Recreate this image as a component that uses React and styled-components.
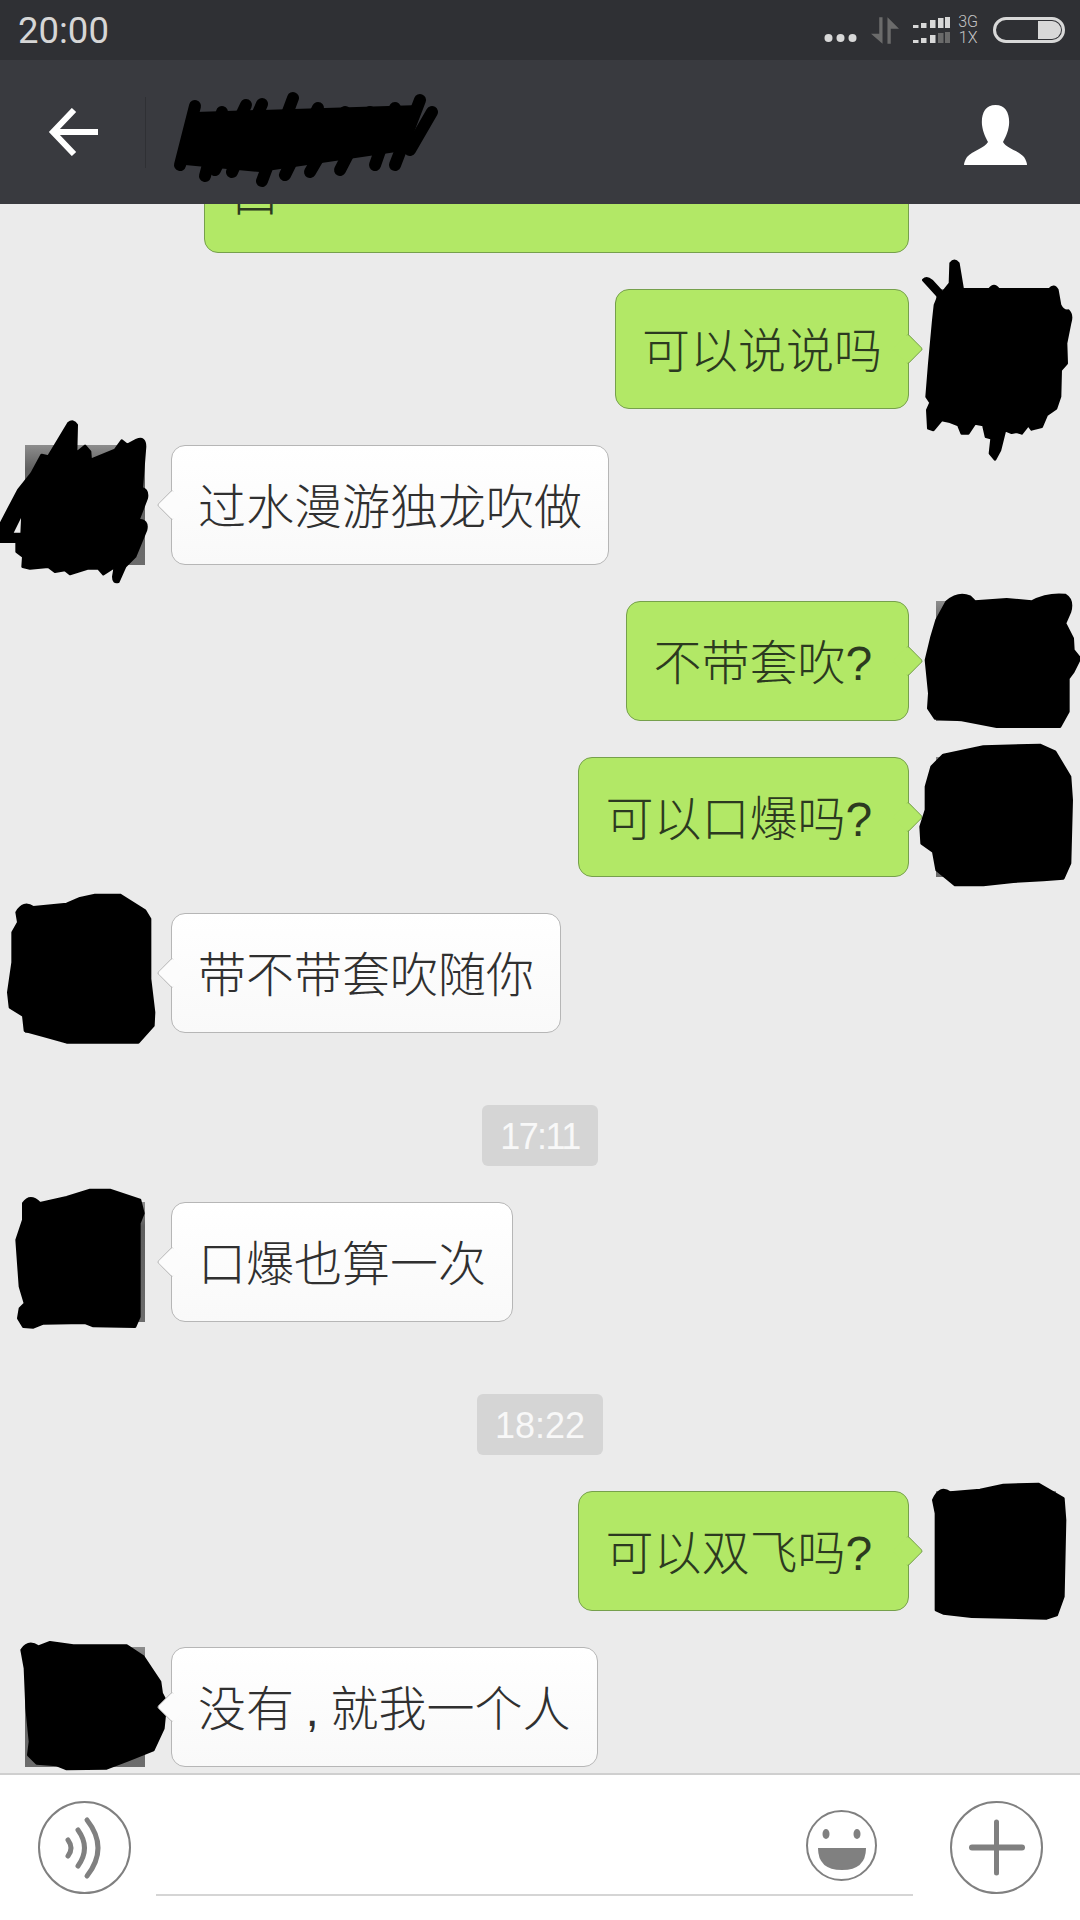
import React from 'react';
import styled, { createGlobalStyle } from 'styled-components';

const GlobalStyle = createGlobalStyle`
  html, body {
    margin: 0;
    padding: 0;
    background: #ebebeb;
  }
  #root {
    width: 1080px;
    height: 1920px;
  }
`;

const Screen = styled.div`
  width: 1080px;
  height: 1920px;
  display: flex;
  flex-direction: column;
  overflow: hidden;
  background: #ebebeb;
  font-family: 'Noto Sans CJK SC', 'Noto Sans', sans-serif;
`;

const StatusBar = styled.div`
  height: 60px;
  flex: none;
  background: #2f3034;
  display: flex;
  align-items: center;
  justify-content: space-between;
  padding: 0 15px 0 18px;
`;

const Clock = styled.span`
  font-family: Roboto, sans-serif;
  font-size: 36.5px;
  color: #d6d6d6;
`;

const StatusIcons = styled.div`
  display: flex;
  align-items: center;
  gap: 14px;
`;

const Dots = styled.svg`
  margin-top: 16px;
`;

const NetLabel = styled.div`
  font-family: Roboto, sans-serif;
  font-weight: 300;
  font-size: 16px;
  line-height: 16px;
  color: #c4c4c4;
  text-align: center;
  margin: 0 1px 0 -6px;
`;

const Battery = styled.div`
  width: 72px;
  height: 26px;
  box-sizing: border-box;
  border: 3px solid #d8d8d8;
  border-radius: 13px;
  display: flex;
  justify-content: flex-end;
  padding: 1px;
`;

const BatteryLevel = styled.div`
  width: 23px;
  background: #d8d8d8;
  border-radius: 0 10px 10px 0;
`;

const NavBar = styled.div`
  height: 144px;
  flex: none;
  background: #393a3f;
  display: flex;
  align-items: center;
  padding: 0 53px 0 48px;
`;

const Separator = styled.div`
  width: 1px;
  height: 71px;
  background: #2f3034;
  margin: 0 26px 0 47px;
`;

const NavTitle = styled.svg`
  flex: none;
  margin-top: 14px;
`;

const NavProfile = styled.svg`
  margin-left: auto;
  margin-top: 5px;
`;

const Chat = styled.div`
  flex: 1;
  min-height: 0;
  overflow: hidden;
  display: flex;
  flex-direction: column;
  justify-content: flex-end;
  gap: 36px;
  padding-bottom: 6px;
`;

const Row = styled.div`
  flex: none;
  display: flex;
  align-items: flex-start;
  justify-content: ${p => (p.$mine ? 'flex-end' : 'flex-start')};
  gap: ${p => (p.$mine ? '27px' : '26px')};
  padding: ${p => (p.$mine ? '0 24px 0 0' : '0 0 0 25px')};
`;

const Avatar = styled.div`
  position: relative;
  flex: none;
  width: 120px;
  height: 120px;
  background: linear-gradient(#8d8d8d, #5f5f5f 20%, #6c6c6c);
`;

const AvatarSpacer = styled.div`
  flex: none;
  width: 120px;
`;

const Scribble = styled.svg`
  position: absolute;
  left: ${p => p.$x}px;
  top: ${p => p.$y}px;
`;

const Bubble = styled.div`
  position: relative;
  box-sizing: border-box;
  min-width: ${p => p.$minWidth || 0}px;
  padding: 25px 26px 29px;
  font-size: 48px;
  font-weight: 300;
  line-height: 64px;
  white-space: nowrap;
  border-radius: 14px;
  border: 1px solid ${p => (p.$mine ? '#76a04c' : '#b6b6b6')};
  color: ${p => (p.$mine ? '#2c3a20' : '#303030')};
  background: ${p => (p.$mine ? '#b2e866' : 'linear-gradient(#ffffff, #f9f9f9)')};

  &::after {
    content: ${p => (p.$noTail ? 'none' : "''")};
    position: absolute;
    top: 48px;
    width: 21px;
    height: 21px;
    transform: rotate(45deg);
    background: ${p => (p.$mine ? '#b2e866' : '#fcfcfc')};
    border-radius: 3px;
    ${p => (p.$mine
      ? 'right: -11px; border-top: 1px solid #76a04c; border-right: 1px solid #76a04c;'
      : 'left: -11px; border-bottom: 1px solid #b6b6b6; border-left: 1px solid #b6b6b6;')}
  }
`;

const Punct = styled.span`
  display: inline-block;
  width: 36.5px;
  line-height: 1;
  text-align: ${p => p.$align || 'left'};
  font-family: 'Liberation Sans', sans-serif;
`;

const TimeRow = styled.div`
  flex: none;
  display: flex;
  justify-content: center;
  margin-top: 36px;
`;

const TimeLabel = styled.span`
  height: 61px;
  line-height: 63px;
  padding: 0 18px;
  border-radius: 6px;
  background: #d5d5d5;
  color: #f8f8f8;
  font-family: 'Liberation Sans', sans-serif;
  font-size: 36px;
  letter-spacing: ${p => p.$spacing || 0}px;
`;

const InputBar = styled.div`
  height: 147px;
  flex: none;
  box-sizing: border-box;
  background: #fff;
  border-top: 2px solid #cfcfcf;
  display: flex;
  align-items: flex-start;
  padding: 26px 37px 0 38px;
`;

const RoundIcon = styled.svg`
  flex: none;
`;

const Field = styled.div`
  width: 757px;
  height: 95px;
  box-sizing: border-box;
  margin: 0 37px 0 25px;
  border-bottom: 2px solid #d5d5d5;
  display: flex;
  justify-content: flex-end;
  padding: 9px 36px 0 0;
`;

const SignalIcon = () => {
  const xs = [0, 8, 17, 25, 32];
  const hs = [3, 5, 8, 10, 11];
  return (
    <svg width="37" height="26" viewBox="0 0 37 26">
      {xs.map((x, i) => (
        <rect key={'t' + i} x={x} y={11 - hs[i]} width="5.5" height={hs[i]} fill="#d8d8d8" />
      ))}
      {xs.map((x, i) => (
        <rect key={'b' + i} x={x} y={26 - hs[i]} width="5.5" height={hs[i]} fill={i > 2 ? '#6a6a6a' : '#d8d8d8'} />
      ))}
    </svg>
  );
};

// black marker scribbles over the avatars, traced from the picture at 3x
const scribbles = {
  a: {
    x: -36, y: -39, w: 180, h: 220,
    d: 'M70 90Q80 80 95 92L128 128 150 100 152 40Q163 25 175 40L180 70 188 118 268 118Q282 98 296 118L448 118Q462 102 472 120L480 165Q490 185 505 182 518 195 510 220L498 280 500 340 482 360 480 440 468 475 440 495 425 530 395 538 385 525 365 550 350 545 335 548 315 540 300 600 285 628 270 610 275 565 258 560 250 525 225 520 205 550 185 550 175 525 150 515 125 510 100 540 85 535 82 480 92 458 80 440 88 340 100 210 105 165 115 140Z',
  },
  b: {
    x: -25, y: -35, w: 180, h: 180,
    d: 'M0 395L0 345 55 240 95 190 125 135 145 140 205 40Q220 28 230 45L228 130 255 108 270 125 272 150 345 120 365 92 382 105 410 90Q435 80 435 110L425 235Q445 240 440 265L415 330Q445 330 438 360L405 440 375 470 355 515Q340 520 340 500L345 470 310 492 295 475 265 475 210 492 195 480 165 485 145 470 90 475 68 470 70 440 50 425 50 395ZM35 372L65 372 68 305Z',
  },
  c: {
    x: -36, y: -21, w: 180, h: 320,
    d: 'M140 65Q175 35 210 50L225 65 320 58 395 65Q440 40 495 45 520 60 510 95L495 130 518 175 520 210 540 235 520 275 505 295 505 395 480 440 370 440 290 440 185 420 105 415 85 385 88 340 78 240 95 170 110 120Z',
  },
  d: {
    x: -36, y: -177, w: 180, h: 320,
    d: 'M95 560L130 525 250 500 420 495 465 515 510 590 515 660 510 850 490 895 430 900 340 905 250 915 165 915 110 870 100 815 65 790 62 740 78 690 78 620Z',
  },
  e: {
    x: -25, y: -34, w: 180, h: 180,
    d: 'M50 100Q70 65 100 85L200 75 240 58 285 48 360 48 435 95 450 120 450 300 462 400 460 440 415 490 200 490 130 470 75 455 70 410 30 385 25 340 38 250 38 160 55 130Z',
  },
  f: {
    x: -25, y: -32, w: 180, h: 180,
    d: 'M70 100Q90 70 120 100L200 82 270 60 330 60 420 90 430 130 418 160 418 440 405 470 280 468 255 458 130 460 100 472 70 470 55 445 60 415 75 400 60 350 50 210 70 150Z',
  },
  g: {
    x: -36, y: -21, w: 180, h: 170,
    d: 'M100 90Q120 45 150 68L240 60 310 45 415 42 490 85 495 150 490 380 470 435 440 445 215 440 130 430 108 420 108 130Z',
  },
  h: {
    x: -25, y: -22, w: 180, h: 160,
    d: 'M65 75Q85 45 115 65L150 52 220 62 380 62 430 95 480 170 485 205 498 230 490 310 460 375 385 405 320 430 200 432 170 420 110 415 85 390 90 350 80 250 75 130Z',
  },
};

const ScribbledAvatar = ({ id }) => {
  const s = scribbles[id];
  return (
    <Avatar>
      <Scribble $x={s.x} $y={s.y} width={s.w} height={s.h} viewBox={`0 0 ${s.w * 3} ${s.h * 3}`}>
        <path d={s.d} fill="#000" fillRule="evenodd" stroke="#000" strokeWidth="8" strokeLinejoin="round" />
      </Scribble>
    </Avatar>
  );
};

const Message = ({ mine, scribble, children }) => (
  <Row $mine={mine}>
    {!mine && <ScribbledAvatar id={scribble} />}
    <Bubble $mine={mine}>{children}</Bubble>
    {mine && <ScribbledAvatar id={scribble} />}
  </Row>
);

const App = () => (
  <Screen>
    <GlobalStyle />
    <StatusBar>
      <Clock>20:00</Clock>
      <StatusIcons>
        <Dots width="33" height="10" viewBox="0 0 33 10">
          <circle cx="4.5" cy="5" r="4" fill="#d8d8d8" />
          <circle cx="16.5" cy="5" r="4" fill="#d8d8d8" />
          <circle cx="28.5" cy="5" r="4" fill="#d8d8d8" />
        </Dots>
        <svg width="28" height="27" viewBox="0 0 85 80">
          <path d="M0 50H25V0H35V80Z" fill="#6b6b6b" />
          <path d="M50 0V80H60V35H85Z" fill="#6b6b6b" />
        </svg>
        <SignalIcon />
        <NetLabel>3G<br />1X</NetLabel>
        <Battery><BatteryLevel /></Battery>
      </StatusIcons>
    </StatusBar>

    <NavBar>
      <svg width="50" height="48" viewBox="0 0 50 48">
        <path d="M26 2L5 24 26 46" fill="none" stroke="#fff" strokeWidth="6" />
        <path d="M5 24H50" fill="none" stroke="#fff" strokeWidth="6" />
      </svg>
      <Separator />
      <NavTitle width="268" height="98" viewBox="172 90 268 98">
        <path d="M195 112L420 105 410 150 260 172 185 165Z" fill="#000" />
        <g fill="none" stroke="#000" strokeWidth="12" strokeLinecap="round">
          <path d="M195 106L180 165" />
          <path d="M222 112L205 176" />
          <path d="M246 105L215 170" />
          <path d="M262 104L232 172" />
          <path d="M293 98L262 181" />
          <path d="M318 108L285 175" />
          <path d="M345 112L310 172" />
          <path d="M370 112L340 170" />
          <path d="M395 108L375 165" />
          <path d="M420 100L395 165" />
          <path d="M432 112L410 150" />
        </g>
      </NavTitle>
      <NavProfile width="63" height="60" viewBox="0 0 63 60">
        <path d="M31.5 0C42 0 46 9 45 20 44 28 41 33 39 37 42 43 55 46 60 52 62 55 63 58 63 60H0C0 58 1 55 3 52 8 46 21 43 24 37 22 33 19 28 18 20 17 9 21 0 31.5 0Z" fill="#fff" />
      </NavProfile>
    </NavBar>

    <Chat>
      <Row $mine>
        <Bubble $mine $minWidth={705} $noTail>&nbsp;<br />口</Bubble>
        <AvatarSpacer />
      </Row>
      <Message mine scribble="a">可以说说吗</Message>
      <Message scribble="b">过水漫游独龙吹做</Message>
      <Message mine scribble="c">不带套吹<Punct>?</Punct></Message>
      <Message mine scribble="d">可以口爆吗<Punct>?</Punct></Message>
      <Message scribble="e">带不带套吹随你</Message>
      <TimeRow><TimeLabel $spacing={-1.6}>17:11</TimeLabel></TimeRow>
      <Message scribble="f">口爆也算一次</Message>
      <TimeRow><TimeLabel>18:22</TimeLabel></TimeRow>
      <Message mine scribble="g">可以双飞吗<Punct>?</Punct></Message>
      <Message scribble="h">没有<Punct $align="center">,</Punct>就我一个人</Message>
    </Chat>

    <InputBar>
      <RoundIcon width="93" height="93" viewBox="0 0 93 93">
        <circle cx="46.5" cy="46.5" r="45.5" fill="none" stroke="#808080" strokeWidth="2" />
        <g fill="none" stroke="#808080" strokeWidth="5" strokeLinecap="round">
          <path d="M30 39Q36 47 30 55" />
          <path d="M40 29Q53 47 40 65" />
          <path d="M49 19Q71 47 49 75" />
        </g>
      </RoundIcon>
      <Field>
        <RoundIcon width="71" height="71" viewBox="0 0 71 71">
          <circle cx="35.5" cy="35.5" r="34.5" fill="none" stroke="#808080" strokeWidth="2" />
          <ellipse cx="20" cy="24" rx="3.5" ry="5" fill="#808080" />
          <ellipse cx="51" cy="24" rx="3.5" ry="5" fill="#808080" />
          <path d="M12 38H60Q60 60 36 60 12 60 12 38Z" fill="#808080" />
        </RoundIcon>
      </Field>
      <RoundIcon width="93" height="93" viewBox="0 0 93 93">
        <circle cx="46.5" cy="46.5" r="45.5" fill="none" stroke="#808080" strokeWidth="2" />
        <path d="M22 46.5H72" stroke="#808080" strokeWidth="6" strokeLinecap="round" />
        <path d="M46.5 21V72" stroke="#808080" strokeWidth="5" strokeLinecap="round" />
      </RoundIcon>
    </InputBar>
  </Screen>
);

export default App;
